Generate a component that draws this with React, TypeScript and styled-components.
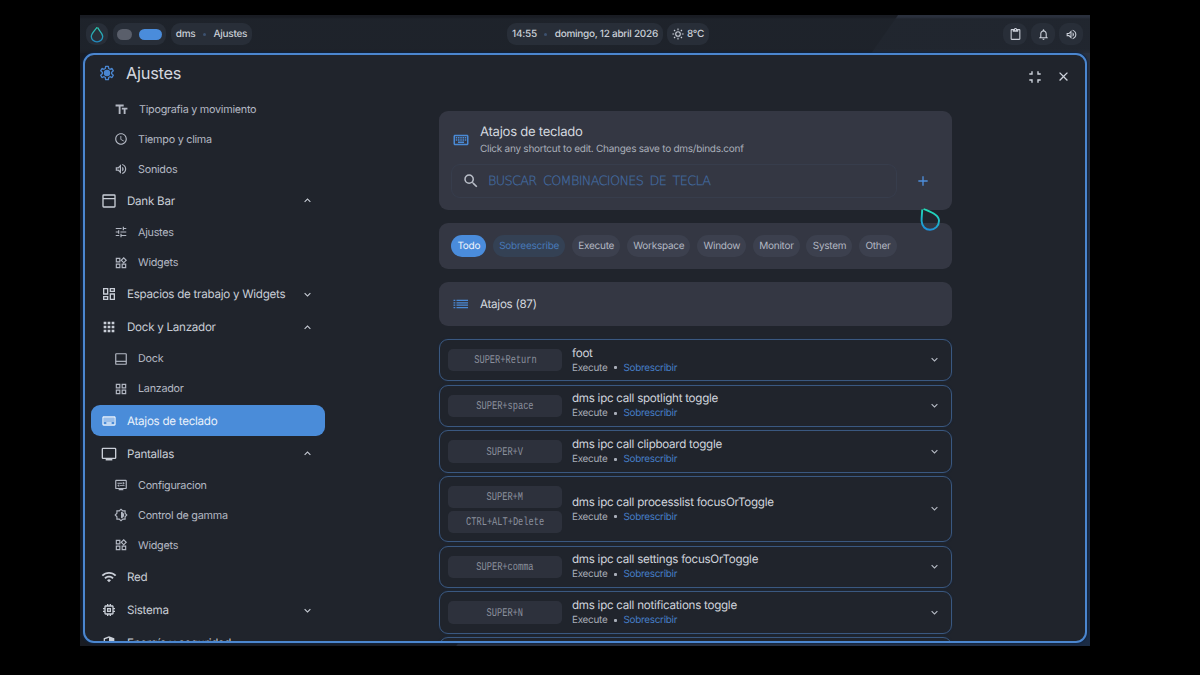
import React from "react";
import styled, { createGlobalStyle } from "styled-components";
import {
  MdTextFields, MdAccessTime, MdOutlineVolumeUp, MdTune, MdOutlineWidgets, MdOutlineDashboard,
  MdApps, MdGridView, MdOutlineKeyboard, MdOutlineDisplaySettings, MdOutlineBrightness6, MdWifi,
  MdOutlineMemory, MdContentPaste, MdNotificationsNone, MdClose,
  MdSearch, MdAdd, MdExpandMore, MdExpandLess,
} from "react-icons/md";

const Global = createGlobalStyle`
  * { box-sizing: border-box; }
  body { margin: 0; background: #000; font-family: Inter, "Liberation Sans", sans-serif; text-rendering: geometricPrecision; }
  svg { display: block; flex: none; }
`;

const Page = styled.div`
  width: 1200px;
  height: 675px;
  padding: 15px 110px 29px 80px;
  background: #000;
  overflow: hidden;
`;

const Desktop = styled.div`
  width: 1010px;
  height: 631px;
  display: flex;
  flex-direction: column;
  padding: 0 3px;
  background: linear-gradient(125deg, #191c23 0 56.3%, #2a303d 56.4% 75%, #263349 85%, #1b2c45 100%);
`;

const TopBar = styled.header`
  height: 38px;
  flex: none;
  display: grid;
  grid-template-columns: 421px auto 1fr;
  align-items: center;
  margin: 0 -3px;
  padding: 0 7px 0 6px;
  background: linear-gradient(to bottom, transparent 2px, rgba(31, 36, 44, 0.84) 4px 34px, rgba(31, 36, 44, 0.4) 38px);
`;

const BarGroup = styled.div<{ $end?: boolean; $gap: number }>`
  display: flex;
  align-items: center;
  gap: ${(p) => p.$gap}px;
  justify-content: ${(p) => (p.$end ? "flex-end" : "flex-start")};
`;

const BarPill = styled.div<{ $width: number; $gap?: number }>`
  width: ${(p) => p.$width}px;
  height: 22px;
  border-radius: 9px;
  background: #282e38;
  color: #c9ced7;
  display: flex;
  align-items: center;
  justify-content: center;
  gap: ${(p) => p.$gap ?? 0}px;
  font-size: 10px;
  letter-spacing: -0.27px;
  font-weight: 500;
  white-space: nowrap;
`;

const WorkspaceDot = styled.i<{ $active?: boolean }>`
  width: ${(p) => (p.$active ? 23 : 15)}px;
  height: 11px;
  border-radius: 6px;
  background: ${(p) => (p.$active ? "#4a8cdb" : "#5a5f6b")};
`;

const Separator = styled.i`
  width: 3px;
  height: 3px;
  border-radius: 50%;
  background: #3c516f;
`;

const Window = styled.main`
  height: 590px;
  flex: none;
  display: flex;
  border: 2px solid #4b86cf;
  border-radius: 11px;
  background: #20242c;
  box-shadow: 0 0 2px 1px #10233f;
  letter-spacing: -0.26px;
  overflow: hidden;
`;

const Sidebar = styled.aside`
  width: 246px;
  flex: none;
  padding: 0 6px;
`;

const SidebarTitle = styled.h1`
  margin: 0;
  height: 39.8px;
  padding: 0 0 3px 8px;
  display: flex;
  align-items: center;
  gap: 11px;
  font-size: 16.4px;
  font-weight: 400;
  color: #d3d7df;
`;

const NavList = styled.nav`
  display: flex;
  flex-direction: column;
  gap: 1.5px;
`;

const NavItem = styled.div<{ $child?: boolean; $active?: boolean }>`
  width: 233.5px;
  height: ${(p) => (p.$child ? 28.6 : 31.6)}px;
  flex: none;
  display: flex;
  align-items: center;
  gap: 10px;
  padding: 0 11px 0 ${(p) => (p.$child ? 23 : 10)}px;
  border-radius: 9px;
  background: ${(p) => (p.$active ? "#4a8cd9" : "transparent")};
  color: ${(p) => (p.$active ? "#e9f1fb" : p.$child ? "#b3b8c3" : "#c9ced7")};
  font-size: ${(p) => (p.$child ? 10.8 : 11.6)}px;
  white-space: nowrap;
`;

const NavLabel = styled.span`
  flex: 1;
`;

const Content = styled.section`
  flex: 1;
  position: relative;
  padding: 56px 0 0 108px;
`;

const WindowButtons = styled.div`
  position: absolute;
  top: 14px;
  right: 14px;
  display: flex;
  align-items: center;
  gap: 15px;
  color: #ccd1da;
`;

const Column = styled.div`
  width: 513px;
  display: flex;
  flex-direction: column;
  gap: 13px;
`;

const Card = styled.div<{ $height: number }>`
  height: ${(p) => p.$height}px;
  flex: none;
  border-radius: 9px;
  background: #343743;
  padding: 0 12px;
`;

const CardHead = styled.div<{ $top: number }>`
  display: flex;
  align-items: center;
  gap: 10px;
  padding: ${(p) => p.$top}px 0 0 1px;
  color: #4a8ad6;
`;

const CardTitle = styled.h2<{ $small?: boolean }>`
  margin: 0;
  font-size: ${(p) => (p.$small ? 11.6 : 13.1)}px;
  line-height: 18px;
  font-weight: 400;
  color: #d3d7df;
`;

const CardText = styled.p`
  margin: 0;
  font-size: 10px;
  line-height: 16px;
  color: #a9aeb9;
  white-space: nowrap;
`;

const SearchRow = styled.div`
  display: flex;
  align-items: center;
  margin-top: 7px;
  gap: 18px;
  color: #4d8fdd;
`;

const SearchField = styled.div`
  width: 446px;
  height: 34px;
  border: 1px solid #373d4c;
  border-radius: 9px;
  display: flex;
  align-items: center;
  gap: 8px;
  padding-left: 10px;
  color: #b9bec8;
`;

const Placeholder = styled.span`
  color: #42699f;
  font-family: "DejaVu Sans", sans-serif;
  font-weight: 200;
  -webkit-text-stroke: 0.25px #42699f;
  font-size: 12.8px;
  letter-spacing: -0.66px;
  word-spacing: 3px;
  line-height: 18px;
  padding-top: 1px;
  white-space: nowrap;
`;

const ChipRow = styled.div`
  height: 46px;
  display: flex;
  align-items: center;
  gap: 6.6px;
`;

const Chip = styled.span<{ $tone?: "on" | "tint" }>`
  height: 21.5px;
  padding: 0 6.1px 0 6.4px;
  border-radius: 11px;
  display: flex;
  align-items: center;
  font-size: 10px;
  white-space: nowrap;
  background: ${(p) => (p.$tone === "on" ? "#4a8cdb" : p.$tone === "tint" ? "#344154" : "#3c404e")};
  color: ${(p) => (p.$tone === "on" ? "#f0f5fc" : p.$tone === "tint" ? "#4779b8" : "#b2b7c2")};
`;

const BindList = styled.div`
  display: flex;
  flex-direction: column;
  gap: 3.3px;
`;

const BindRow = styled.div<{ $tall?: boolean }>`
  height: ${(p) => (p.$tall ? 66.4 : 42.4)}px;
  flex: none;
  border: 1px solid #3a5880;
  border-radius: 9px;
  display: flex;
  align-items: center;
  padding: 0 10px 0 8px;
  gap: 10px;
  box-shadow: 0 0 2px #182b47;
`;

const Keys = styled.div`
  width: 114px;
  display: flex;
  flex-direction: column;
  gap: 2.5px;
`;

const Key = styled.kbd`
  height: 22.5px;
  border-radius: 5px;
  background: #2d313c;
  color: #8b909c;
  display: flex;
  align-items: center;
  justify-content: center;
  font: 11.8px "Liberation Mono", monospace;
  letter-spacing: 0;
`;

const KeyText = styled.span`
  transform: scaleX(0.735);
  padding-top: 0.5px;
`;

const BindInfo = styled.div`
  flex: 1;
  white-space: nowrap;
`;

const BindName = styled.div`
  font-size: 11.6px;
  line-height: 15px;
  color: #d0d4dd;
`;

const BindMeta = styled.div`
  display: flex;
  align-items: center;
  gap: 6.5px;
  font-size: 9.9px;
  line-height: 14px;
  color: #a9aeb9;
`;

const MetaDot = styled.i`
  width: 3px;
  height: 3px;
  border-radius: 1px;
  background: #a9aeb9;
`;

const Override = styled.span`
  color: #467fc8;
`;

const Chevron = styled.span`
  display: flex;
  padding-bottom: 1px;
  color: #b9bec8;
`;

const Pointer = styled.svg`
  position: absolute;
  left: 920px;
  top: 206px;
`;

const DropLogo = () => (
  <svg width="14" height="17" viewBox="0 0 14 17" fill="none">
    <defs>
      <linearGradient id="drop" x1="0" y1="0" x2="0" y2="1">
        <stop offset="0" stopColor="#2cc9ae" />
        <stop offset="1" stopColor="#2287bd" />
      </linearGradient>
    </defs>
    <path d="M7 1.2C6.2 3.2 1.3 7 1.3 10.6a5.7 5.3 0 0 0 11.4 0C12.7 7 8.5 4 7.6 1.6" stroke="url(#drop)" strokeWidth="1.3" />
  </svg>
);

const SunIcon = () => (
  <svg width="12" height="12" viewBox="0 0 12 12" fill="none" stroke="currentColor" strokeWidth="1.1">
    <circle cx="6" cy="6" r="2.3" />
    <path d="M6 .4v1.8M6 9.8v1.8M.4 6h1.8M9.8 6h1.8M2 2l1.2 1.2M8.8 8.8 10 10M2 10l1.2-1.2M8.8 3.2 10 2" />
  </svg>
);

const GearIcon = () => (
  <svg width="16" height="16" viewBox="0 0 24 24" fill="none" stroke="#4a86d0" strokeWidth="2" strokeLinejoin="round">
    <path d="M10 2h4l.5 3.2 2 1.2 3-1.2 2 3.5L19 10.8v2.4l2.5 2.1-2 3.5-3-1.2-2 1.2L14 22h-4l-.5-3.2-2-1.2-3 1.2-2-3.5L5 13.2v-2.4L2.5 8.7l2-3.5 3 1.2 2-1.2z" />
    <circle cx="12" cy="12" r="3.8" fill="#4a86d0" />
  </svg>
);

const PanelTopIcon = () => (
  <svg width="16" height="16" viewBox="0 0 24 24" fill="none" stroke="currentColor" strokeWidth="2">
    <rect x="3" y="3" width="18" height="18" rx="1" />
    <path d="M3 8.5h18" />
  </svg>
);

const PanelBottomIcon = () => (
  <svg width="14" height="14" viewBox="0 0 24 24" fill="none" stroke="currentColor" strokeWidth="2">
    <rect x="3" y="3" width="18" height="18" rx="1" />
    <path d="M3 16h18" />
  </svg>
);

const MonitorIcon = () => (
  <svg width="16" height="16" viewBox="0 0 24 24" fill="none" stroke="currentColor" strokeWidth="2">
    <rect x="2" y="3.5" width="20" height="15" rx="1" />
    <path d="M7 20.2h10" strokeWidth="3" />
  </svg>
);

const ShieldIcon = () => (
  <svg width="16" height="16" viewBox="0 0 24 24" fill="currentColor">
    <path d="M12 2 4 5v6.1c0 5 3.4 9.7 8 10.9 4.6-1.2 8-5.9 8-10.9V5zm0 2.1v15.8C8.5 18.8 6 15 6 11.1V6.4z" fillRule="evenodd" />
  </svg>
);

const ListIcon = () => (
  <svg width="18" height="16" viewBox="0 0 18 16" fill="none" stroke="currentColor" strokeWidth="1.3">
    <path d="M1.5 4.3h1.8M1.5 6.8h1.8M1.5 9.2h1.8M1.5 11.7h1.8M4.5 4.3H16M4.5 6.8H16M4.5 9.2H16M4.5 11.7H16" />
  </svg>
);

const RestoreIcon = () => (
  <svg width="12" height="12" viewBox="0 0 12 12" fill="none" stroke="currentColor" strokeWidth="1.4">
    <path d="M3 .3V3H.3M9 .3V3h2.7M3 11.7V9H.3M9 11.7V9h2.7" />
  </svg>
);

type Nav = { label: string; icon: React.ReactNode; child?: boolean; active?: boolean; fold?: "open" | "closed" };

const navItems: Nav[] = [
  { label: "Tipografia y movimiento", icon: <MdTextFields size={15} />, child: true },
  { label: "Tiempo y clima", icon: <MdAccessTime size={14} />, child: true },
  { label: "Sonidos", icon: <MdOutlineVolumeUp size={14} />, child: true },
  { label: "Dank Bar", icon: <PanelTopIcon />, fold: "open" },
  { label: "Ajustes", icon: <MdTune size={14} />, child: true },
  { label: "Widgets", icon: <MdOutlineWidgets size={14} />, child: true },
  { label: "Espacios de trabajo y Widgets", icon: <MdOutlineDashboard size={16} />, fold: "closed" },
  { label: "Dock y Lanzador", icon: <MdApps size={16} />, fold: "open" },
  { label: "Dock", icon: <PanelBottomIcon />, child: true },
  { label: "Lanzador", icon: <MdGridView size={14} />, child: true },
  { label: "Atajos de teclado", icon: <MdOutlineKeyboard size={16} />, active: true },
  { label: "Pantallas", icon: <MonitorIcon />, fold: "open" },
  { label: "Configuracion", icon: <MdOutlineDisplaySettings size={14} />, child: true },
  { label: "Control de gamma", icon: <MdOutlineBrightness6 size={14} />, child: true },
  { label: "Widgets", icon: <MdOutlineWidgets size={14} />, child: true },
  { label: "Red", icon: <MdWifi size={16} /> },
  { label: "Sistema", icon: <MdOutlineMemory size={16} />, fold: "closed" },
  { label: "Energía y seguridad", icon: <ShieldIcon />, fold: "closed" },
];

const binds = [
  { keys: ["SUPER+Return"], name: "foot" },
  { keys: ["SUPER+space"], name: "dms ipc call spotlight toggle" },
  { keys: ["SUPER+V"], name: "dms ipc call clipboard toggle" },
  { keys: ["SUPER+M", "CTRL+ALT+Delete"], name: "dms ipc call processlist focusOrToggle" },
  { keys: ["SUPER+comma"], name: "dms ipc call settings focusOrToggle" },
  { keys: ["SUPER+N"], name: "dms ipc call notifications toggle" },
];

const filters = ["Execute", "Workspace", "Window", "Monitor", "System", "Other"];

export default function App() {
  return (
    <Page>
      <Global />
      <Desktop>
        <TopBar>
          <BarGroup $gap={5}>
            <BarPill $width={22}><DropLogo /></BarPill>
            <BarPill $width={53} $gap={7}><WorkspaceDot /><WorkspaceDot $active /></BarPill>
            <BarPill $width={81} $gap={7.5}>dms<Separator />Ajustes</BarPill>
          </BarGroup>
          <BarGroup $gap={4}>
            <BarPill $width={156} $gap={7.5}>14:55<Separator />domingo, 12 abril 2026</BarPill>
            <BarPill $width={42} $gap={3}><SunIcon />8°C</BarPill>
          </BarGroup>
          <BarGroup $gap={4} $end>
            <BarPill $width={24}><MdContentPaste size={13} /></BarPill>
            <BarPill $width={24}><MdNotificationsNone size={13} /></BarPill>
            <BarPill $width={24}><MdOutlineVolumeUp size={13} /></BarPill>
          </BarGroup>
        </TopBar>
        <Window>
          <Sidebar>
            <SidebarTitle><GearIcon />Ajustes</SidebarTitle>
            <NavList>
              {navItems.map((n, i) => (
                <NavItem key={i} $child={n.child} $active={n.active}>
                  {n.icon}
                  <NavLabel>{n.label}</NavLabel>
                  {n.fold === "open" && <MdExpandLess size={13} />}
                  {n.fold === "closed" && <MdExpandMore size={13} />}
                </NavItem>
              ))}
            </NavList>
          </Sidebar>
          <Content>
            <WindowButtons><RestoreIcon /><MdClose size={15} /></WindowButtons>
            <Column>
              <Card $height={99}>
                <CardHead $top={12}>
                  <MdOutlineKeyboard size={18} />
                  <div>
                    <CardTitle>Atajos de teclado</CardTitle>
                    <CardText>Click any shortcut to edit. Changes save to dms/binds.conf</CardText>
                  </div>
                </CardHead>
                <SearchRow>
                  <SearchField>
                    <MdSearch size={18} />
                    <Placeholder>BUSCAR COMBINACIONES DE TECLA</Placeholder>
                  </SearchField>
                  <MdAdd size={16} />
                </SearchRow>
              </Card>
              <Card $height={46}>
                <ChipRow>
                  <Chip $tone="on">Todo</Chip>
                  <Chip $tone="tint">Sobreescribe</Chip>
                  {filters.map((f) => <Chip key={f}>{f}</Chip>)}
                </ChipRow>
              </Card>
              <Card $height={44}>
                <CardHead $top={13}><ListIcon /><CardTitle $small>Atajos (87)</CardTitle></CardHead>
              </Card>
              <BindList>
                {binds.map((b) => (
                  <BindRow key={b.name} $tall={b.keys.length > 1}>
                    <Keys>{b.keys.map((k) => <Key key={k}><KeyText>{k}</KeyText></Key>)}</Keys>
                    <BindInfo>
                      <BindName>{b.name}</BindName>
                      <BindMeta>Execute<MetaDot /><Override>Sobrescribir</Override></BindMeta>
                    </BindInfo>
                    <Chevron><MdExpandMore size={13} /></Chevron>
                  </BindRow>
                ))}
                <BindRow />
              </BindList>
            </Column>
          </Content>
        </Window>
      </Desktop>
      <Pointer width="22" height="26" viewBox="0 0 22 26" fill="none">
        <defs>
          <linearGradient id="pointer" x1="0.5" y1="0" x2="0.3" y2="1">
            <stop offset="0" stopColor="#22e0b4" />
            <stop offset="1" stopColor="#1d8fdc" />
          </linearGradient>
        </defs>
        <path d="M2.2 3.5C2.1 8 1.5 11 1.6 15c.3 5.500 4 8.800 8.400 8.800 5 0 9-4 9-9C19 8.500 10.500 6 3.600 3" stroke="url(#pointer)" strokeWidth="1.9" />
      </Pointer>
    </Page>
  );
}
